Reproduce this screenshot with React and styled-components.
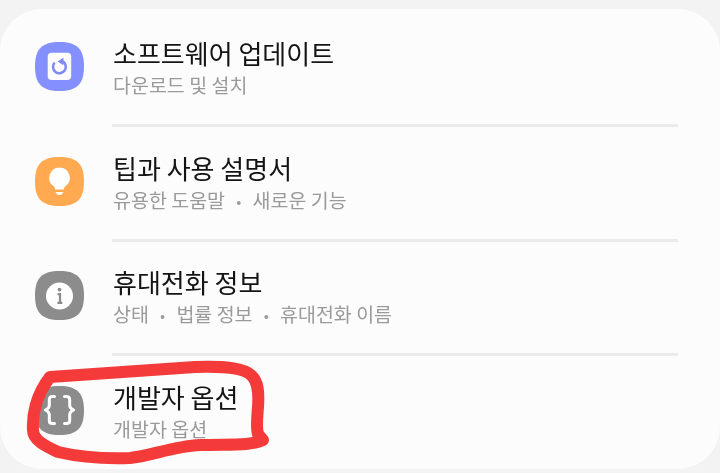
import React from "react";
import styled, { createGlobalStyle } from "styled-components";

const Global = createGlobalStyle`
  html, body { margin: 0; padding: 0; background: #f3f3f3; }
  body { width: 720px; height: 473px; overflow: hidden; font-family: "Noto Sans CJK KR", "Noto Sans", sans-serif; }
`;

const Page = styled.div`
  position: relative;
  width: 720px;
  height: 473px;
  padding-top: 9px;
  box-sizing: border-box;
`;

const Card = styled.div`
  height: 460px;
  background: #fcfcfc;
  border-radius: 42px;
  overflow: hidden;
  filter: blur(0.35px);
`;

const Row = styled.div`
  display: flex;
  height: ${(p) => (p.$first ? "118px" : "114.5px")};
  padding: 0 42px 0 35px;
  box-sizing: border-box;
  gap: 28px;
`;

const IconSlot = styled.div`
  flex: none;
  width: 49px;
  height: 49px;
  margin-top: ${(p) => (p.$first ? "33px" : "29.5px")};
`;

const Body = styled.div`
  flex: 1;
  min-width: 0;
  display: flex;
  flex-direction: column;
  padding: ${(p) => (p.$first ? "26px" : "22.5px")} 0 0 1px;
  border-bottom: ${(p) => (p.$last ? "none" : "3px solid #ebebeb")};
`;

const Title = styled.div`
  font-size: 26px;
  line-height: 36px;
  color: #141414;
`;

const Sub = styled.div`
  font-size: 19.5px;
  line-height: 28px;
  color: #9a9a9a;
  white-space: nowrap;
`;

const Dot = styled.span`
  display: inline-block;
  width: 27.5px;
  text-align: center;
  font-size: 15px;
  vertical-align: 1px;
`;

const Stroke = styled.svg`
  position: absolute;
  inset: 0;
  pointer-events: none;
`;

const Squircle = ({ color, children }) => (
  <svg width="49" height="49" viewBox="0 0 49 49">
    <path
      d="M24.5 0C42 0 49 7 49 24.5C49 42 42 49 24.5 49C7 49 0 42 0 24.5C0 7 7 0 24.5 0Z"
      fill={color}
    />
    {children}
  </svg>
);

const UpdateIcon = () => (
  <Squircle color="#8490ff">
    <rect x="12.7" y="10.7" width="23.5" height="27.3" rx="4" fill="#fdfdff" />
    <path d="M19.6 20.6A6.4 6.4 0 1 0 27.4 19.2" fill="none" stroke="#7f8bf3" strokeWidth="2.6" />
    <path d="M28.4 15.4L22.6 19.6L28.4 23.2Z" fill="#7f8bf3" />
  </Squircle>
);

const TipIcon = () => (
  <Squircle color="#ffa950">
    <path d="M24.5 10.5a10.3 10.3 0 0 1 6.2 18.5c-1.3 1-1.7 2-1.9 3.4h-8.6c-.2-1.4-.6-2.4-1.9-3.4a10.3 10.3 0 0 1 6.2-18.5Z" fill="#fff" />
    <path d="M20.4 35h8.2l-2.4 3h-3.4z" fill="#fff" />
  </Squircle>
);

const InfoIcon = () => (
  <Squircle color="#8c8c8c">
    <circle cx="24.5" cy="25" r="13.5" fill="#fff" />
    <circle cx="24.5" cy="18.6" r="1.9" fill="#8c8c8c" />
    <path d="M22.6 23.2h2.4v8.4M22.4 31.8h5" fill="none" stroke="#8c8c8c" strokeWidth="2.3" />
  </Squircle>
);

const BracesIcon = () => (
  <Squircle color="#8c8c8c">
    <g fill="none" stroke="#fff" strokeWidth="3" strokeLinecap="round" strokeLinejoin="round">
      <path d="M19.5 10.5h-2c-2.2 0-3.2 1.1-3.2 3.1v5.9c0 1.7-1.5 3.4-4 4.5c2.5 1.1 4 2.8 4 4.5v5.9c0 2 1 3.1 3.2 3.1h2" />
      <path d="M29.5 10.5h2c2.2 0 3.2 1.1 3.2 3.1v5.9c0 1.7 1.5 3.4 4 4.5c-2.5 1.1-4 2.8-4 4.5v5.9c0 2-1 3.1-3.2 3.1h-2" />
    </g>
  </Squircle>
);

const items = [
  { icon: <UpdateIcon />, title: "소프트웨어 업데이트", sub: ["다운로드 및 설치"] },
  { icon: <TipIcon />, title: "팁과 사용 설명서", sub: ["유용한 도움말", "새로운 기능"] },
  { icon: <InfoIcon />, title: "휴대전화 정보", sub: ["상태", "법률 정보", "휴대전화 이름"] },
  { icon: <BracesIcon />, title: "개발자 옵션", sub: ["개발자 옵션"] },
];

export default function App() {
  return (
    <Page>
      <Global />
      <Card>
        {items.map((it, i) => (
          <Row key={it.title} $first={i === 0}>
            <IconSlot $first={i === 0}>{it.icon}</IconSlot>
            <Body $first={i === 0} $last={i === items.length - 1}>
              <Title>{it.title}</Title>
              <Sub>
                {it.sub.map((s, j) => (
                  <React.Fragment key={s}>
                    {j > 0 && <Dot>•</Dot>}
                    {s}
                  </React.Fragment>
                ))}
              </Sub>
            </Body>
          </Row>
        ))}
      </Card>
      <Stroke width="720" height="473" viewBox="0 0 720 473">
        <path
          d="M50 377C80 375 120 372 195 367C225 366 245 368 252 376C258 382 259 392 258 407C257 420 256 428 258 434L263 440C250 446 230 444 200 445C175 446 150 456 130 458C100 459 75 456 58 452C45 446 33 440 33 430C32 415 36 395 50 377Z"
          fill="none"
          stroke="#f53a3a"
          strokeWidth="12"
          strokeLinejoin="round"
          strokeLinecap="round"
        />
      </Stroke>
    </Page>
  );
}
